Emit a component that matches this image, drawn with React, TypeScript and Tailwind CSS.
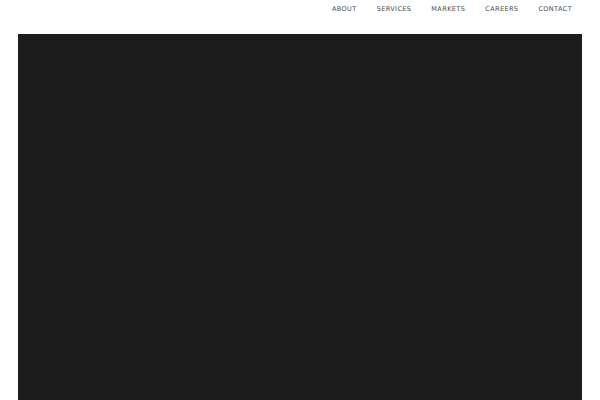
export default function App() {
  const items = ["ABOUT", "SERVICES", "MARKETS", "CAREERS", "CONTACT"];
  return (
    <div className="w-[600px] h-[400px] overflow-hidden bg-white flex flex-col">
      <nav className="h-[34px] flex justify-end items-start pr-[28px]">
        <ul className="flex gap-[20px] pt-[5px]">
          {items.map((t) => (
            <li
              key={t}
              className="text-[6.5px] leading-[9px] tracking-[0.4px] text-[#4a4a4a]"
              style={{ fontFamily: '"DejaVu Sans", sans-serif' }}
            >
              {t}
            </li>
          ))}
        </ul>
      </nav>
      <div className="mx-[18px] flex-1 bg-[#1c1c1c]" />
    </div>
  );
}
